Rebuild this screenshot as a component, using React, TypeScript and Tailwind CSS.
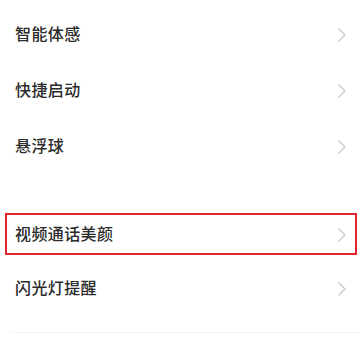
const Chevron = () => (
  <svg width="8" height="14" viewBox="0 0 8 14" fill="none" className="shrink-0">
    <path d="M1 1l6 6-6 6" stroke="#c8c8c8" strokeWidth="1.4" strokeLinecap="round" strokeLinejoin="round" />
  </svg>
);

const Row = ({ label, height, marked }: { label: string; height: string; marked?: boolean }) => (
  <div className={`relative flex items-center justify-between pl-[15px] pr-[14px] ${height}`}>
    <span className="text-[16px] font-medium text-[#2b2b2b] tracking-[0.4px] -translate-y-[2px]">{label}</span>
    <Chevron />
    {marked && (
      <div className="absolute left-[5px] right-[3px] top-[5px] bottom-[7px] border-2 border-[#e0262d]" />
    )}
  </div>
);

export default function App() {
  return (
    <div
      className="w-[360px] h-[360px] bg-white overflow-hidden"
      style={{ fontFamily: '"Noto Sans CJK SC", "Noto Sans", sans-serif' }}
    >
      <div className="pt-[7px]">
        <Row label="智能体感" height="h-[56px]" />
        <Row label="快捷启动" height="h-[56px]" />
        <Row label="悬浮球" height="h-[56px]" />
      </div>
      <div className="mt-[33px]">
        <Row label="视频通话美颜" height="h-[54px]" marked />
        <Row label="闪光灯提醒" height="h-[54px]" />
        <div className="ml-[10px] h-px bg-[#f4f4f4] mt-[16px]" />
      </div>
    </div>
  );
}
